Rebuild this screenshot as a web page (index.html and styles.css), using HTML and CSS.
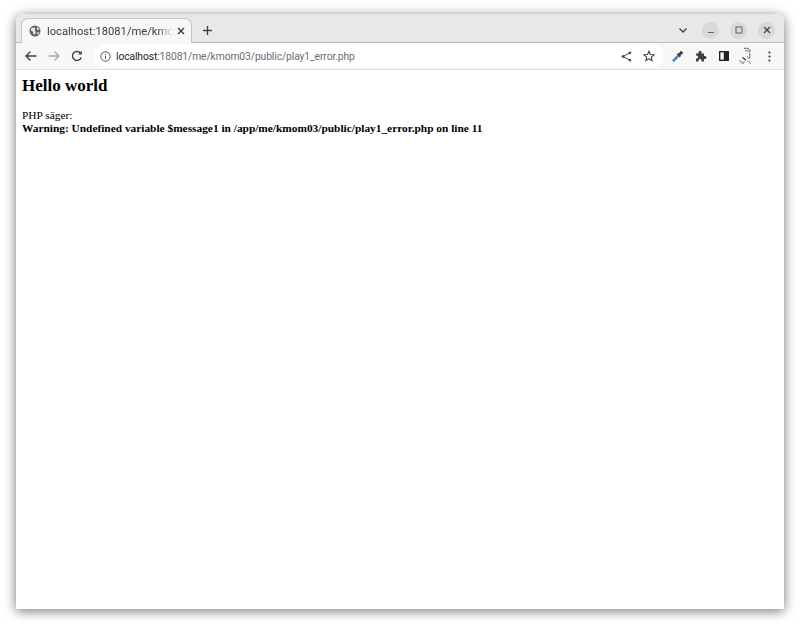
FILE: index.html
```html
<!DOCTYPE html>
<html lang="en">
<head>
    <meta charset="UTF-8">
    <title>localhost:18081/me/kmom03/public/play1_error.php</title>
    <link rel="stylesheet" href="styles.css">
</head>
<body>
    <div class="window">
        <div class="tabstrip">
            <div class="tab">
                <svg class="globe" width="12" height="12" viewBox="0 0 12 12">
                    <circle cx="6" cy="6" r="5.5" fill="#5f6368"></circle>
                    <path d="M2 3.2 5 2.4 6.6 3.6 5.6 5.4 7 7 5.8 9.8 4.4 9 4 6.8 2 5.6zM8 1.8 10.4 4 9.6 5 8 4.4zM8.4 7.4 10.4 7 9.2 9.4 8 9.2z" fill="#e8e8e8"></path>
                </svg>
                <span class="tab-title">localhost:18081/me/kmom03/public/play1_error.php</span>
                <svg class="tab-close" width="8" height="8" viewBox="0 0 8 8" fill="none" stroke="#3c4043" stroke-width="1.4">
                    <line x1="1" y1="1" x2="7" y2="7"></line>
                    <line x1="7" y1="1" x2="1" y2="7"></line>
                </svg>
            </div>
            <svg class="new-tab" width="9" height="9" viewBox="0 0 9 9" stroke="#3c4043" stroke-width="1.4">
                <line x1="4.500" y1="0" x2="4.500" y2="9"></line>
                <line x1="0" y1="4.500" x2="9" y2="4.500"></line>
            </svg>
            <svg class="tab-search" width="8" height="5" viewBox="0 0 8 5" fill="none" stroke="#3c4043" stroke-width="1.3">
                <polyline points="0.5 0.5 4 4 7.5 0.5"></polyline>
            </svg>
            <div class="win-btn">
                <svg width="8" height="8" viewBox="0 0 8 8" stroke="#5f6368" stroke-width="1"><line x1="1" y1="6.5" x2="7" y2="6.5"></line></svg>
            </div>
            <div class="win-btn">
                <svg width="8" height="8" viewBox="0 0 8 8" fill="none" stroke="#5f6368" stroke-width="1"><rect x="1" y="1" width="6" height="6"></rect></svg>
            </div>
            <div class="win-btn">
                <svg width="8" height="8" viewBox="0 0 8 8" stroke="#3c4043" stroke-width="1.2"><line x1="1" y1="1" x2="7" y2="7"></line><line x1="7" y1="1" x2="1" y2="7"></line></svg>
            </div>
        </div>

        <div class="toolbar">
            <svg class="nav" width="12" height="12" viewBox="0 0 12 12" fill="none" stroke="#3c4043" stroke-width="1.4">
                <path d="M11.5 6H1M5.5 1.5 1 6l4.500 4.500"></path>
            </svg>
            <svg class="nav" width="12" height="12" viewBox="0 0 12 12" fill="none" stroke="#a6a8ab" stroke-width="1.4">
                <path d="M.5 6H11M6.500 1.500 11 6l-4.500 4.500"></path>
            </svg>
            <svg class="nav" width="12" height="12" viewBox="0 0 12 12" fill="none" stroke="#3c4043" stroke-width="1.400">
                <path d="M10.200 7.500A4.500 4.500 0 1 1 9.400 3"></path>
                <path d="M10.800.8v3.600H7.200z" fill="#3c4043" stroke="none"></path>
            </svg>
            <div class="omnibox">
                <svg width="11" height="11" viewBox="0 0 11 11" fill="none" stroke="#3c4043" stroke-width="0.900">
                    <circle cx="5.500" cy="5.500" r="4.700"></circle>
                    <line x1="5.500" y1="4.800" x2="5.500" y2="8.200"></line>
                    <line x1="5.500" y1="2.700" x2="5.500" y2="3.800"></line>
                </svg>
                <div class="url"><span class="host">localhost</span>:18081/me/kmom03/public/play1_error.php</div>
                <svg class="share" width="11" height="11" viewBox="0 0 11 11" fill="#3c4043" stroke="#3c4043" stroke-width="1">
                    <polyline points="9 1.800 2 5.500 9 9.200" fill="none"></polyline>
                    <circle cx="9" cy="1.800" r="0.900"></circle>
                    <circle cx="2" cy="5.500" r="0.900"></circle>
                    <circle cx="9" cy="9.200" r="0.900"></circle>
                </svg>
                <svg class="star" width="12" height="12" viewBox="0 0 12 12" fill="none" stroke="#3c4043" stroke-width="1.100">
                    <path d="M6 1.200 7.400 4.500l3.600.3-2.700 2.300.8 3.500L6 8.800l-3.100 1.800.8-3.500L1 4.800l3.600-.3z"></path>
                </svg>
            </div>
            <svg class="ext dropper" width="12" height="12" viewBox="0 0 12 12" fill="none">
                <path d="M1 11.200 6 6.200" stroke="#3f7fc4" stroke-width="2.400"></path>
                <path d="M5.200 3.800 8.200 6.800" stroke="#3c4043" stroke-width="1.800"></path>
                <path d="M7 5 10.200 1.800" stroke="#3c4043" stroke-width="3"></path>
            </svg>
            <svg class="ext" width="12" height="12" viewBox="0 0 12 12" fill="#3c4043">
                <path d="M1 3.500h2.500V2.300a1.500 1.500 0 0 1 3 0v1.200H9V6h1a1.500 1.500 0 0 1 0 3H9v2.500H6.500v-1a1.500 1.500 0 0 0-3 0v1H1V8.500h.6a1.500 1.500 0 0 0 0-3H1z"></path>
            </svg>
            <svg class="ext" width="12" height="12" viewBox="0 0 12 12" fill="none" stroke="#202124" stroke-width="1.400">
                <rect x="1.700" y="1.700" width="8.600" height="8.600"></rect>
                <rect x="6.500" y="1.700" width="3.800" height="8.600" fill="#202124"></rect>
            </svg>
            <svg class="avatar" width="16" height="19" viewBox="0 0 16 19" fill="none" stroke="#55585c" stroke-width="1">
                <path d="M6 1.500C9 .5 12 2 12.500 4.500M7 4c2-.8 4-.3 4.500 1.500M11.500 6.500c.8 2 .5 4-.8 5.500M9 9.500l1.500 1"></path>
                <path d="M1 13.500c2 .5 4 2 5 3.500M2.500 16c1.500 0 3-.5 4.500-1.500M9 14c1.500.5 3 1.500 3.500 3" stroke="#8a8d90"></path>
                <path d="M4.500 10.500 8 13" stroke="#2f3134" stroke-width="1.400"></path>
            </svg>
            <svg class="menu" width="3" height="11" viewBox="0 0 3 11" fill="#3c4043">
                <circle cx="1.500" cy="1.500" r="1.100"></circle>
                <circle cx="1.500" cy="5.500" r="1.100"></circle>
                <circle cx="1.500" cy="9.500" r="1.100"></circle>
            </svg>
        </div>

        <div class="page">
            <h2>Hello world</h2>
            <p>PHP säger:<br><b>Warning: Undefined variable $message1 in /app/me/kmom03/public/play1_error.php on line 11</b></p>
        </div>
    </div>
</body>
</html>
```

FILE: styles.css
```css
* {
    margin: 0;
    padding: 0;
    box-sizing: border-box;
}

html, body {
    height: 100%;
    background-color: #fff;
}

body {
    padding: 14px 16px 18px;
}

.window {
    height: 100%;
    display: flex;
    flex-direction: column;
    background-color: #fff;
    border-radius: 7px 7px 0 0;
    box-shadow: 0 2px 12px rgba(0, 0, 0, 0.55);
}

.tabstrip {
    height: 29px;
    display: flex;
    align-items: center;
    padding: 4px 9px 0 5px;
    background-color: #e8e8e8;
    border-bottom: 1px solid #bdbdbd;
    border-radius: 7px 7px 0 0;
}

.tab {
    width: 171px;
    height: 25px;
    margin-bottom: -1px;
    align-self: flex-end;
    display: flex;
    align-items: center;
    padding: 0 6px 0 7px;
    background-color: #f7f7f7;
    border: 1px solid #c4c4c4;
    border-bottom: none;
    border-radius: 7px 7px 0 0;
}

.globe {
    flex: none;
}

.tab-title {
    flex: 1;
    margin-left: 6px;
    overflow: hidden;
    white-space: nowrap;
    font: 11.2px Roboto, sans-serif;
    color: #3c4043;
    -webkit-mask-image: linear-gradient(to right, #000 88%, transparent);
    mask-image: linear-gradient(to right, #000 88%, transparent);
}

.tab-close {
    flex: none;
    margin-left: 4px;
}

.new-tab {
    margin-left: 11px;
}

.tab-search {
    margin-left: auto;
    margin-right: 15px;
}

.win-btn {
    width: 17px;
    height: 17px;
    margin-left: 11px;
    display: flex;
    align-items: center;
    justify-content: center;
    background-color: #d9d9d9;
    border-radius: 50%;
}

.tab-search + .win-btn {
    margin-left: 0;
}

.toolbar {
    height: 27px;
    display: flex;
    align-items: center;
    padding: 0 0 0 9px;
    background-color: #f7f7f7;
    border-bottom: 1px solid #e3e3e3;
}

.nav {
    flex: none;
    margin-right: 11px;
}

.omnibox {
    flex: none;
    width: 569px;
    height: 24px;
    display: flex;
    align-items: center;
    padding: 0 8px 0 6px;
    background-color: #fff;
    border-radius: 12px;
}

.url {
    margin-left: 5px;
    flex: 1;
    white-space: nowrap;
    font: 10.3px Roboto, sans-serif;
    letter-spacing: -0.1px;
    color: #6a6d71;
}

.host {
    color: #202124;
}

.share {
    margin-right: 11px;
}

.ext {
    flex: none;
    margin-left: 11px;
}

.dropper {
    margin-left: 9px;
}

.avatar {
    flex: none;
    margin-left: 8px;
}

.menu {
    flex: none;
    margin-left: 14px;
}

.page {
    flex: 1;
    padding: 6px;
    font-family: "Liberation Serif", serif;
    font-size: 11.36px;
    line-height: 13px;
    color: #000;
}

.page h2 {
    font-size: 17px;
    line-height: 20px;
    margin-bottom: 13px;
}
```
